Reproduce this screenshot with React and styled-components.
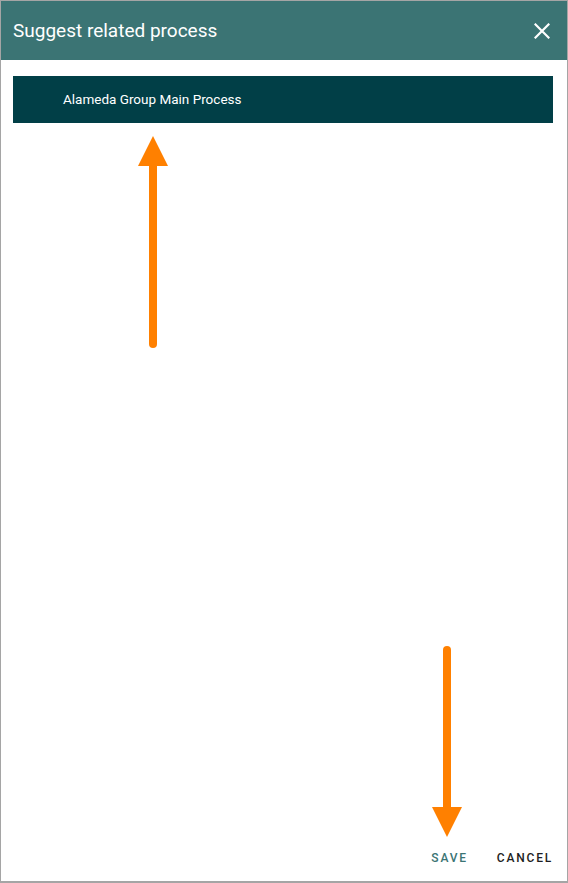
import React from "react";
import styled, { createGlobalStyle } from "styled-components";

const Global = createGlobalStyle`
  html, body { margin: 0; padding: 0; background: #fff; }
  body { font-family: Roboto, "Liberation Sans", Arial, sans-serif; }
  * { box-sizing: border-box; }
`;

const Dialog = styled.div`
  position: relative;
  width: 568px;
  height: 883px;
  border: 1px solid #a5a5a5;
  border-bottom-width: 2px;
  display: flex;
  flex-direction: column;
  background: #fff;
`;

const Header = styled.div`
  height: 59px;
  background: #3b7474;
  display: flex;
  align-items: center;
  justify-content: space-between;
  padding: 0 15px 0 12px;
`;

const Title = styled.h2`
  margin: 0;
  margin-top: -1px;
  font-size: 19px;
  font-weight: 400;
  color: #fff;
`;

const CloseButton = styled.button`
  border: 0;
  background: none;
  padding: 0;
  width: 20px;
  height: 20px;
  display: flex;
  align-items: center;
  justify-content: center;
  cursor: pointer;
`;

const Body = styled.div`
  flex: 1;
  padding: 16px 14px 0 12px;
`;

const ProcessItem = styled.div`
  height: 47px;
  background: #013f47;
  color: #fff;
  font-size: 13.5px;
  font-weight: 400;
  display: flex;
  align-items: center;
  padding-left: 50px;
  padding-bottom: 1px;
`;

const Footer = styled.div`
  height: 46px;
  display: flex;
  justify-content: flex-end;
  align-items: center;
  padding: 0 14px 0 0;
  gap: 29px;
`;

const TextButton = styled.button`
  border: 0;
  background: none;
  padding: 0;
  font-family: inherit;
  font-size: 12px;
  font-weight: 500;
  letter-spacing: 1.8px;
  color: ${(p) => (p.$primary ? "#3b7474" : "#1d1d22")};
  cursor: pointer;
`;

const Arrow = styled.svg`
  position: absolute;
  left: ${(p) => p.$x}px;
  top: ${(p) => p.$y}px;
  overflow: visible;
`;

function UpArrow({ x, y, length }) {
  return (
    <Arrow $x={x} $y={y} width="32" height={length}>
      <line x1="16" y1="28" x2="16" y2={length - 4} stroke="#ff8000" strokeWidth="8" strokeLinecap="round" />
      <polygon points={`16,0 31,30 1,30`} fill="#ff8000" />
    </Arrow>
  );
}

function DownArrow({ x, y, length }) {
  return (
    <Arrow $x={x} $y={y} width="32" height={length}>
      <line x1="16" y1="4" x2="16" y2={length - 28} stroke="#ff8000" strokeWidth="8" strokeLinecap="round" />
      <polygon points={`1,${length - 30} 31,${length - 30} 16,${length}`} fill="#ff8000" />
    </Arrow>
  );
}

export default function App() {
  return (
    <>
      <Global />
      <Dialog>
        <Header>
          <Title>Suggest related process</Title>
          <CloseButton aria-label="close">
            <svg width="16" height="16" viewBox="0 0 16 16">
              <path d="M1.5 1.5 L14.5 14.5 M14.5 1.5 L1.5 14.5" stroke="#fff" strokeWidth="2.2" strokeLinecap="square" />
            </svg>
          </CloseButton>
        </Header>
        <Body>
          <ProcessItem>Alameda Group Main Process</ProcessItem>
        </Body>
        <Footer>
          <TextButton $primary>SAVE</TextButton>
          <TextButton>CANCEL</TextButton>
        </Footer>
        <UpArrow x={136} y={135} length={212} />
        <DownArrow x={430} y={645} length={191} />
      </Dialog>
    </>
  );
}
